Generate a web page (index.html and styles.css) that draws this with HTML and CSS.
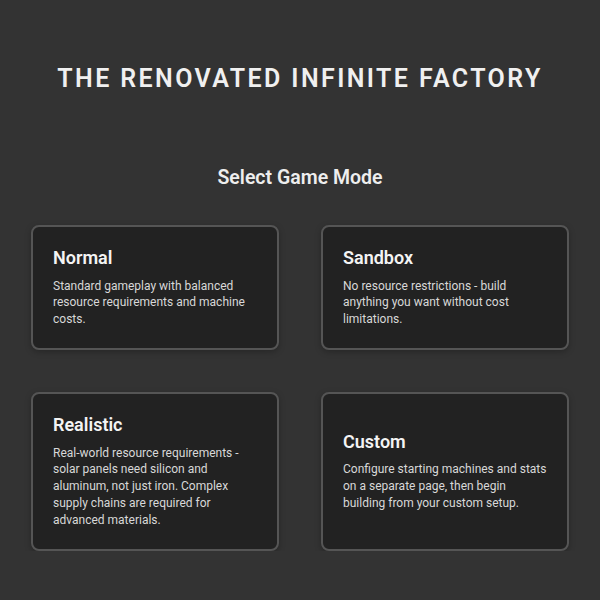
FILE: index.html
```html
<!DOCTYPE html>
<html>
<head>
<meta charset="utf-8">
<link rel="stylesheet" href="styles.css">
</head>
<body>
<main class="page">
  <h1 class="title">The Renovated Infinite Factory</h1>
  <h2 class="subtitle">Select Game Mode</h2>
  <div class="modes">
    <div class="mode">
      <h3 class="mode-name">Normal</h3>
      <p class="mode-desc">Standard gameplay with balanced resource requirements and machine costs.</p>
    </div>
    <div class="mode">
      <h3 class="mode-name">Sandbox</h3>
      <p class="mode-desc">No resource restrictions - build anything you want without cost limitations.</p>
    </div>
    <div class="mode">
      <h3 class="mode-name">Realistic</h3>
      <p class="mode-desc">Real-world resource requirements - solar panels need silicon and aluminum, not just iron. Complex supply chains are required for advanced materials.</p>
    </div>
    <div class="mode">
      <h3 class="mode-name">Custom</h3>
      <p class="mode-desc">Configure starting machines and stats on a separate page, then begin building from your custom setup.</p>
    </div>
  </div>
</main>
</body>
</html>
```
FILE: styles.css
```css
html, body {
  margin: 0;
  padding: 0;
  background: #333333;
  font-family: Roboto, "Liberation Sans", sans-serif;
  color: #f2f2f2;
}
.page {
  padding: 64px 31px 0;
  display: flex;
  flex-direction: column;
  align-items: stretch;
}
.title {
  margin: 0;
  font-size: 25px;
  line-height: 30px;
  font-weight: 600;
  letter-spacing: 2.4px;
  text-transform: uppercase;
  text-align: center;
  white-space: nowrap;
  color: #f0f0f0;
}
.subtitle {
  margin: 72px 0 0;
  font-size: 19.5px;
  line-height: 24px;
  font-weight: 600;
  text-align: center;
  color: #eeeeee;
}
.modes {
  margin-top: 35px;
  display: grid;
  grid-template-columns: 1fr 1fr;
  gap: 42px;
}
.mode {
  background: #222222;
  border: 2px solid #555555;
  border-radius: 8px;
  padding: 20px;
  display: flex;
  flex-direction: column;
  justify-content: center;
  box-shadow: 0 2px 6px rgba(0,0,0,0.25);
}
.mode-name {
  margin: 0 0 9px;
  font-size: 18px;
  line-height: 21.6px;
  font-weight: 600;
  color: #f4f4f4;
}
.mode-desc {
  margin: 0;
  font-size: 12px;
  line-height: 16.8px;
  color: #d8d8d8;
}
```
